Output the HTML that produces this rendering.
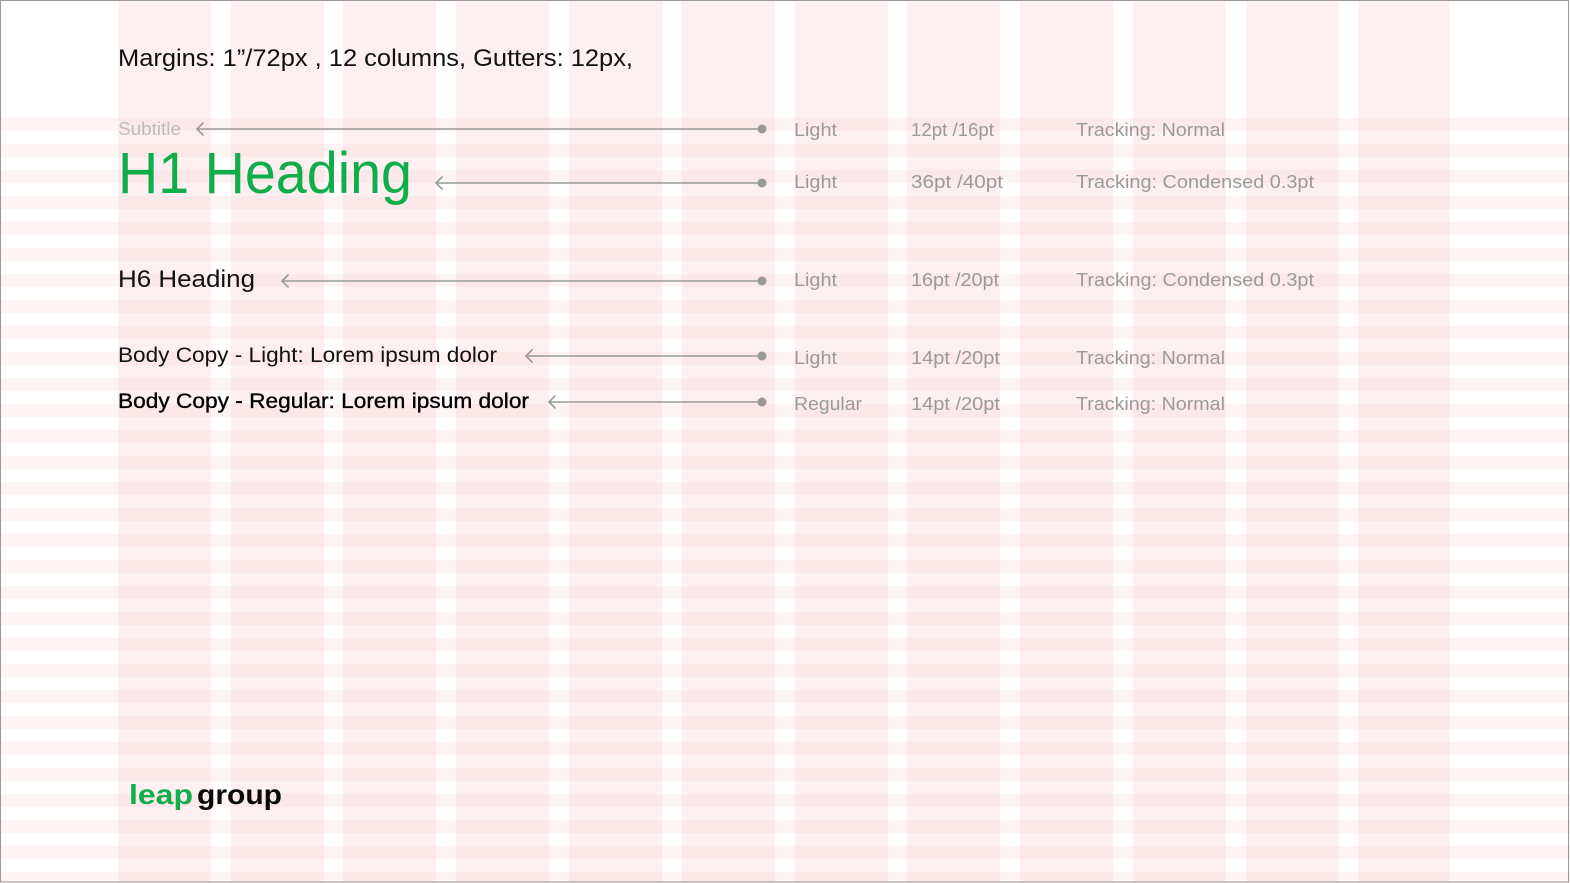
<!DOCTYPE html>
<html><head><meta charset="utf-8">
<style>
html,body{margin:0;padding:0;background:#fff;}
svg{display:block;}
text{font-family:"Liberation Sans",sans-serif;}
</style></head>
<body>
<svg width="1570" height="883" viewBox="0 0 1570 883" xmlns="http://www.w3.org/2000/svg">
<defs>
<pattern id="rows" x="0" y="118" width="1570" height="26" patternUnits="userSpaceOnUse">
<rect x="0" y="0" width="1570" height="13" fill="rgba(252,215,215,0.28)"/>
</pattern>
</defs>
<rect width="1570" height="883" fill="#fff"/>
<g fill="rgba(252,205,208,0.32)">
<rect x="118" y="0" width="93" height="883"/>
<rect x="231" y="0" width="93" height="883"/>
<rect x="343" y="0" width="93" height="883"/>
<rect x="456" y="0" width="93" height="883"/>
<rect x="569" y="0" width="93" height="883"/>
<rect x="682" y="0" width="93" height="883"/>
<rect x="795" y="0" width="93" height="883"/>
<rect x="907" y="0" width="93" height="883"/>
<rect x="1020" y="0" width="93" height="883"/>
<rect x="1133" y="0" width="93" height="883"/>
<rect x="1246" y="0" width="93" height="883"/>
<rect x="1358" y="0" width="92" height="883"/>
</g>
<rect x="0" y="118" width="1570" height="765" fill="url(#rows)"/>
<rect x="0.5" y="0.5" width="1568" height="881.5" fill="none" stroke="#999" stroke-width="1"/>

<text x="118" y="66" font-size="24" fill="#111" textLength="515" lengthAdjust="spacingAndGlyphs">Margins: 1”/72px , 12 columns,  Gutters: 12px,</text>
<text x="118" y="135" font-size="18" fill="#bdbdbd" textLength="63" lengthAdjust="spacingAndGlyphs">Subtitle</text>
<text x="118" y="193" font-size="58" fill="#10ad4b" textLength="294" lengthAdjust="spacingAndGlyphs">H1 Heading</text>
<text x="118" y="287" font-size="24" fill="#111" textLength="137" lengthAdjust="spacingAndGlyphs">H6 Heading</text>
<text x="118" y="362" font-size="21" fill="#111" textLength="379" lengthAdjust="spacingAndGlyphs">Body Copy - Light: Lorem ipsum dolor</text>
<text x="118" y="408" font-size="21" fill="#000" stroke="#000" stroke-width="0.35" textLength="411" lengthAdjust="spacingAndGlyphs">Body Copy - Regular: Lorem ipsum dolor</text>

<g stroke="#999" stroke-width="1.6" fill="none" stroke-linecap="round">
<path d="M197 129H762M203 123L197 129L203 135"/>
<path d="M436 183H762M442 177L436 183L442 189"/>
<path d="M282 281H762M288 275L282 281L288 287"/>
<path d="M526 356H762M532 350L526 356L532 362"/>
<path d="M549 402H762M555 396L549 402L555 408"/>
</g>
<g fill="#999">
<circle cx="762" cy="129" r="4.5"/>
<circle cx="762" cy="183" r="4.5"/>
<circle cx="762" cy="281" r="4.5"/>
<circle cx="762" cy="356" r="4.5"/>
<circle cx="762" cy="402" r="4.5"/>
</g>

<g font-size="18" fill="#9a9a9a">
<text x="794" y="136" textLength="43" lengthAdjust="spacingAndGlyphs">Light</text>
<text x="911" y="136" textLength="83" lengthAdjust="spacingAndGlyphs">12pt /16pt</text>
<text x="1076" y="136" textLength="149" lengthAdjust="spacingAndGlyphs">Tracking: Normal</text>

<text x="794" y="188" textLength="43" lengthAdjust="spacingAndGlyphs">Light</text>
<text x="911" y="188" textLength="92" lengthAdjust="spacingAndGlyphs">36pt /40pt</text>
<text x="1076" y="188" textLength="238" lengthAdjust="spacingAndGlyphs">Tracking: Condensed  0.3pt</text>

<text x="794" y="286" textLength="43" lengthAdjust="spacingAndGlyphs">Light</text>
<text x="911" y="286" textLength="88" lengthAdjust="spacingAndGlyphs">16pt /20pt</text>
<text x="1076" y="286" textLength="238" lengthAdjust="spacingAndGlyphs">Tracking: Condensed  0.3pt</text>

<text x="794" y="364" textLength="43" lengthAdjust="spacingAndGlyphs">Light</text>
<text x="911" y="364" textLength="89" lengthAdjust="spacingAndGlyphs">14pt /20pt</text>
<text x="1076" y="364" textLength="149" lengthAdjust="spacingAndGlyphs">Tracking: Normal</text>

<text x="794" y="410" textLength="68" lengthAdjust="spacingAndGlyphs">Regular</text>
<text x="911" y="410" textLength="89" lengthAdjust="spacingAndGlyphs">14pt /20pt</text>
<text x="1076" y="410" textLength="149" lengthAdjust="spacingAndGlyphs">Tracking: Normal</text>
</g>

<text x="129" y="804" font-size="28" font-weight="bold" fill="#10ad4b" textLength="64" lengthAdjust="spacingAndGlyphs">leap</text>
<text x="197" y="804" font-size="28" font-weight="bold" fill="#0a0a0a" textLength="85" lengthAdjust="spacingAndGlyphs">group</text>
</svg>
</body></html>
